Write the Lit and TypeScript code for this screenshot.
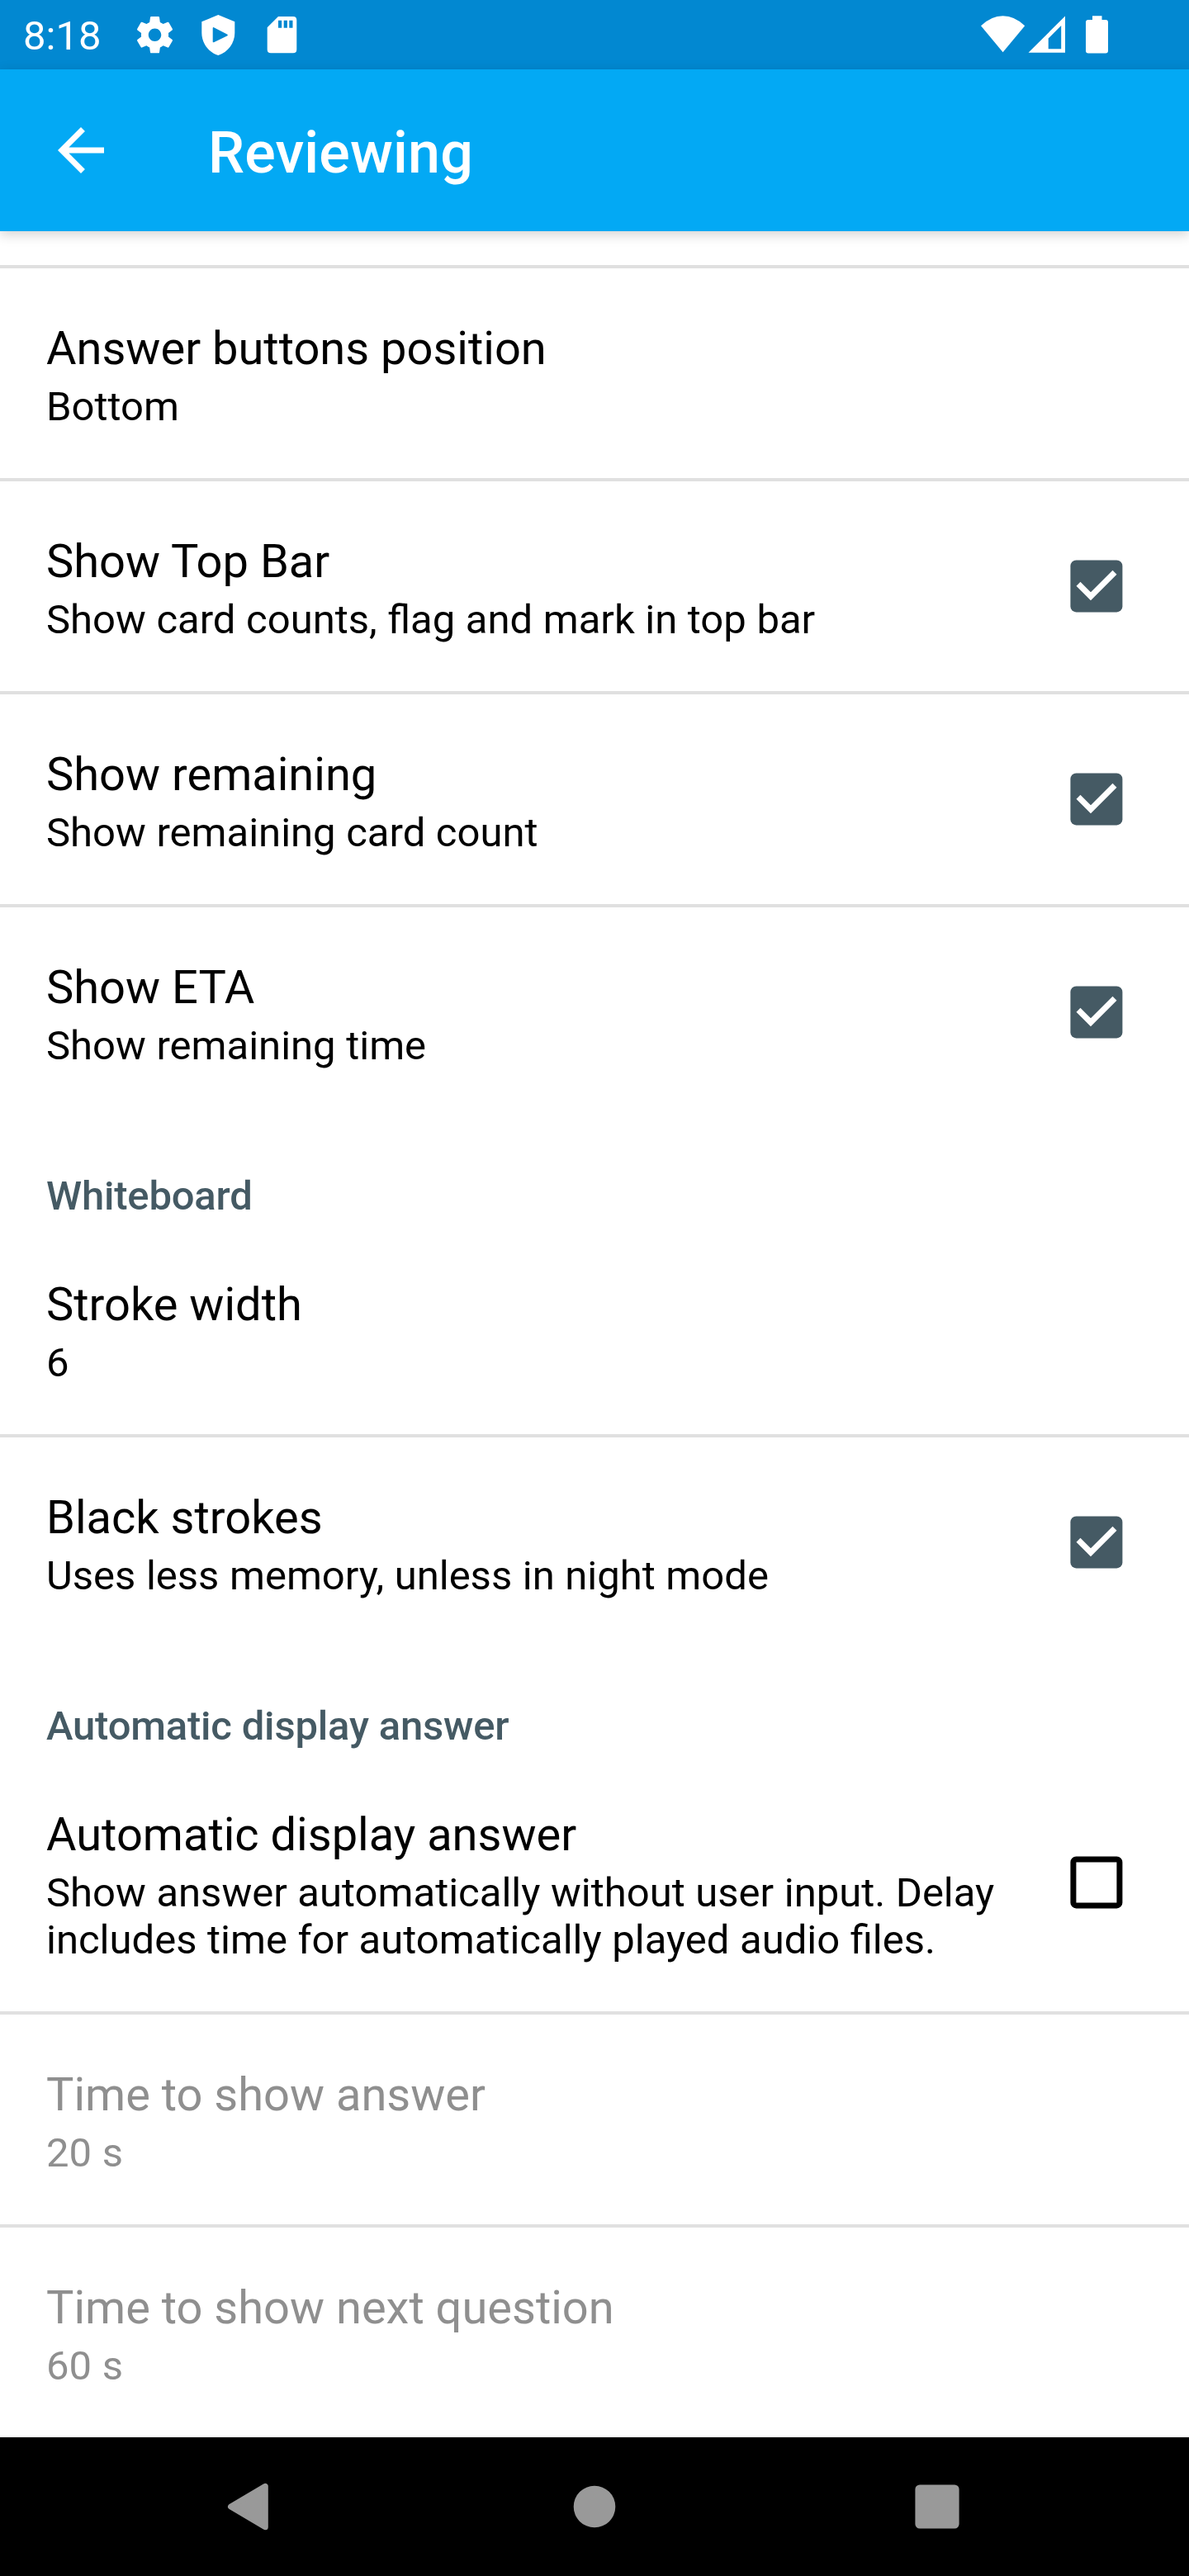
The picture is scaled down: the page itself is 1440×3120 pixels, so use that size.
import { LitElement, html, svg, css, nothing } from "lit";
import { customElement, property } from "lit/decorators.js";

type Row = { title: string; summary: string; checked?: boolean; disabled?: boolean };
type Group = { header?: string; rows: Row[] };

const GROUPS: Group[] = [
  {
    rows: [
      { title: "Answer buttons position", summary: "Bottom" },
      { title: "Show Top Bar", summary: "Show card counts, flag and mark in top bar", checked: true },
      { title: "Show remaining", summary: "Show remaining card count", checked: true },
      { title: "Show ETA", summary: "Show remaining time", checked: true },
    ],
  },
  {
    header: "Whiteboard",
    rows: [
      { title: "Stroke width", summary: "6" },
      { title: "Black strokes", summary: "Uses less memory, unless in night mode", checked: true },
    ],
  },
  {
    header: "Automatic display answer",
    rows: [
      {
        title: "Automatic display answer",
        summary: "Show answer automatically without user input. Delay includes time for automatically played audio files.",
        checked: false,
      },
      { title: "Time to show answer", summary: "20 s", disabled: true },
      { title: "Time to show next question", summary: "60 s", disabled: true },
    ],
  },
];

@customElement("check-box")
export class CheckBox extends LitElement {
  @property({ type: Boolean }) checked = false;

  static styles = css`
    :host { display: block; width: 64px; height: 64px; }
    svg { display: block; }
  `;

  render() {
    return html`<svg width="64" height="64" viewBox="0 0 64 64" fill="none">
      ${this.checked
        ? svg`<rect x="0.4" y="0.4" width="63" height="63" rx="7" fill="#455a64" />
            <path d="M10 29.3 25 44.3 54 15.3" stroke="#fff" stroke-width="7" />`
        : svg`<rect x="3.9" y="3.9" width="56" height="56" rx="3.5" stroke="#000" stroke-width="7" />`}
    </svg>`;
  }
}

@customElement("status-bar")
export class StatusBar extends LitElement {
  static styles = css`
    :host { display: flex; justify-content: space-between; height: 84px; background: #0288d1; color: #fff; }
    .side { display: flex; }
    .clock { padding-left: 28px; width: 134px; font-size: 49px; line-height: 57px; padding-top: 15px; white-space: nowrap; }
    svg { display: block; }
  `;

  render() {
    return html`
      <div class="side">
        <div class="clock">8:18</div>
        <svg width="210" height="84" viewBox="162 0 210 84" fill="#fff">
          <path transform="translate(161 15.7) scale(2.21)" d="M19.43 12.98c.04-.32.07-.64.07-.98s-.03-.66-.07-.98l2.11-1.65c.19-.15.24-.42.12-.64l-2-3.46c-.12-.22-.39-.3-.61-.22l-2.49 1c-.52-.4-1.08-.73-1.69-.98l-.38-2.65C14.46 2.18 14.25 2 14 2h-4c-.25 0-.46.18-.49.42l-.38 2.65c-.61.25-1.17.59-1.69.98l-2.49-1c-.23-.09-.49 0-.61.22l-2 3.46c-.13.22-.07.49.12.64l2.11 1.65c-.04.32-.07.65-.07.98s.03.66.07.98l-2.11 1.65c-.19.15-.24.42-.12.64l2 3.46c.12.22.39.3.61.22l2.49-1c.52.4 1.08.73 1.69.98l.38 2.65c.03.24.24.42.49.42h4c.25 0 .46-.18.49-.42l.38-2.65c.61-.25 1.17-.59 1.69-.98l2.49 1c.23.09.49 0 .61-.22l2-3.46c.12-.22.07-.49-.12-.64l-2.11-1.65zM12 15.5c-1.93 0-3.5-1.57-3.5-3.5s1.57-3.5 3.5-3.5 3.5 1.57 3.5 3.5-1.57 3.5-3.5 3.5z" />
          <path fill-rule="evenodd" d="M264.3 18 284.3 26.3V40C284.3 52 276 63.5 264.3 67 252.500 63.5 244.300 52 244.300 40V26.300ZM257.700 34.300V50.500Q257.700 51.700 259 51.200L275 43.500Q276.700 42.400 275 41.400L259 33.200Q257.700 32.800 257.700 34.300Z" />
          <path fill-rule="evenodd" d="M337 20H355Q359.300 20 359.300 24.300V60Q359.300 64.300 355 64.300H328Q323.700 64.300 323.700 60V33.300ZM337 24.700V33.700H341.200V24.700ZM343.700 24.700V33.700H347.900V24.700ZM350.300 24.700V33.700H354.500V24.700Z" />
        </svg>
      </div>
      <svg width="280" height="84" viewBox="1160 0 280 84" fill="#fff">
        <path d="M1214.600 63.200 1188 31.300Q1200.500 19.300 1214.600 19.300T1241.200 31.300Z" />
        <path fill-rule="evenodd" d="M1290 19.500V63.700H1245.500ZM1285.200 31 1269.700 46.500V59.300H1285.200Z" />
        <path d="M1323 19.300H1334.500V24H1339Q1342 24 1342 27V61.500Q1342 64.500 1339 64.500H1318Q1315 64.500 1315 61.500V27Q1315 24 1318 24H1323Z" />
      </svg>
    `;
  }
}

@customElement("nav-bar")
export class NavBar extends LitElement {
  static styles = css`
    :host { display: block; height: 168px; background: #000; }
    svg { display: block; }
  `;

  render() {
    return html`<svg width="1440" height="168" viewBox="0 0 1440 168" fill="#999">
      <path d="M279.500 84 321.300 59.300V108.700Z" stroke="#999" stroke-width="7" stroke-linejoin="round" />
      <circle cx="720" cy="84" r="25.300" />
      <rect x="1108.400" y="57.400" width="53.200" height="53.200" rx="5.500" />
    </svg>`;
  }
}

@customElement("pref-row")
export class PrefRow extends LitElement {
  @property({ attribute: false }) row!: Row;

  static styles = css`
    :host { display: flex; align-items: center; box-sizing: border-box; padding: 64px 80px 58px 56px; border-top: 4px solid #e0e0e0; }
    :host([plain]) { border-top-color: transparent; }
    .text { flex: 1; color: #000; }
    .title { font-size: 56px; line-height: 66px; white-space: nowrap; }
    .summary { font-size: 49px; line-height: 57px; padding-top: 9px; word-spacing: 0.4px; }
    .box { display: flex; align-items: center; height: 0; margin-top: -7px; padding-left: 64px; }
    .dim { color: #8f8f8f; }
  `;

  render() {
    const { title, summary, checked, disabled } = this.row;
    return html`
      <div class="text ${disabled ? "dim" : ""}">
        <div class="title">${title}</div>
        <div class="summary">${summary}</div>
      </div>
      ${checked === undefined ? nothing : html`<div class="box"><check-box ?checked=${checked}></check-box></div>`}
    `;
  }
}

@customElement("app-root")
export class AppRoot extends LitElement {
  static styles = css`
    :host { display: flex; flex-direction: column; width: 1440px; height: 3120px; overflow: hidden; background: #fff; font-family: Roboto, "Liberation Sans", sans-serif; }
    status-bar, nav-bar, .toolbar, pref-row { flex: none; }
    .toolbar { display: flex; align-items: center; height: 196px; box-sizing: border-box; padding-left: 56px; gap: 112px; background: #03a9f4; color: #fff; box-shadow: 0 4px 14px rgba(0, 0, 0, 0.18); }
    .name { font-size: 70px; line-height: 82px; font-weight: 500; padding-top: 5px; letter-spacing: 0.15px; }
    .list { flex: 1; padding-top: 41px; }
    .header { box-sizing: border-box; height: 126px; padding: 67px 56px 0; font-size: 49px; line-height: 57px; font-weight: 500; letter-spacing: -0.2px; color: #455a64; }
  `;

  render() {
    return html`
      <status-bar></status-bar>
      <div class="toolbar">
        <svg width="84" height="84" viewBox="0 0 24 24" fill="#fff">
          <path d="M20 11H7.830l5.590-5.590L12 4l-8 8 8 8 1.410-1.410L7.830 13H20v-2z" />
        </svg>
        <div class="name">Reviewing</div>
      </div>
      <div class="list">
        ${GROUPS.map(
          (g) => html`
            ${g.header ? html`<div class="header">${g.header}</div>` : nothing}
            ${g.rows.map((r, i) => html`<pref-row .row=${r} ?plain=${!!g.header && i === 0}></pref-row>`)}
          `,
        )}
      </div>
      <nav-bar></nav-bar>
    `;
  }
}
